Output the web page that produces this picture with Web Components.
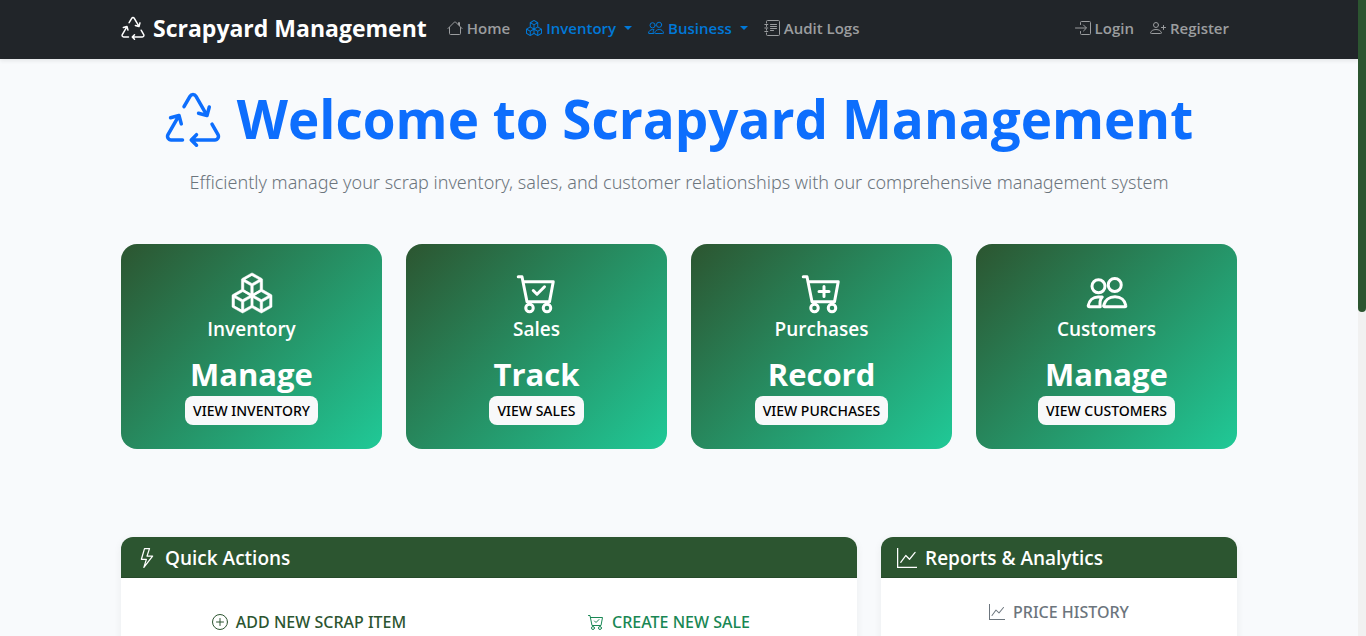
<!DOCTYPE html>
<html lang="en">
<head>
<meta charset="utf-8">
<title>Scrapyard Management</title>
<style>
  html, body { margin: 0; height: 100%; }
  body { font-family: "Open Sans", "Noto Sans", sans-serif; font-size: 16px; line-height: 24px; color: #212529; background: #f8fafc; }
</style>
</head>
<body>
<scrap-app></scrap-app>
<script>
const define = (name, html) => {
  const template = document.createElement('template');
  template.innerHTML = html;
  customElements.define(name, class extends HTMLElement {
    static observedAttributes = ['icon'];
    constructor() {
      super();
      this.attachShadow({ mode: 'open' }).append(template.content.cloneNode(true));
    }
    attributeChangedCallback(attribute, before, value) {
      this.shadowRoot.querySelector('scrap-icon').setAttribute('name', value);
    }
  });
};

const outline = d => `<path class="outline" d="${d}"/>`;
const solid = d => `<path class="solid" d="${d}"/>`;
const cart = outline('M.5 1.5H2l.4 2L4 11.5h9l1.5-8H2.4M6.5 14a1.5 1.5 0 1 1-3 0 1.5 1.5 0 0 1 3 0M13.5 14a1.5 1.5 0 1 1-3 0 1.5 1.5 0 0 1 3 0');
const icons = {
  recycle: solid('M9.302 1.256a1.5 1.5 0 0 0-2.604 0l-1.704 2.98a.5.5 0 0 0 .869.497l1.703-2.981a.5.5 0 0 1 .868 0l2.54 4.444-1.256-.337a.5.5 0 1 0-.26.966l2.415.647a.5.5 0 0 0 .613-.353l.647-2.415a.5.5 0 1 0-.966-.259l-.333 1.242zM2.973 7.773l-1.255.337a.5.5 0 1 1-.26-.966l2.416-.647a.5.5 0 0 1 .612.353l.647 2.415a.5.5 0 0 1-.966.259l-.333-1.242-2.545 4.454a.5.5 0 0 0 .434.748H5a.5.5 0 0 1 0 1H1.723A1.5 1.5 0 0 1 .421 12.24zm10.89 1.463a.5.5 0 1 0-.868.496l1.716 3.004a.5.5 0 0 1-.434.748h-5.57l.647-.646a.5.5 0 1 0-.708-.707l-1.5 1.5a.5.5 0 0 0 0 .707l1.5 1.5a.5.5 0 1 0 .708-.707l-.647-.647h5.57a1.5 1.5 0 0 0 1.302-2.244z'),
  house: outline('M1 8.5 7.65 1.85a.5.5 0 0 1 .7 0L15 8.5M2.5 7.5v6a1 1 0 0 0 1 1h9a1 1 0 0 0 1-1v-6M11.5 4.5v-2h1v3.2'),
  boxes: solid('M7.752.066a.5.5 0 0 1 .496 0l3.75 2.143a.5.5 0 0 1 .252.434v3.995l3.498 2A.5.5 0 0 1 16 9.07v4.286a.5.5 0 0 1-.252.434l-3.75 2.143a.5.5 0 0 1-.496 0l-3.502-2-3.502 2.001a.5.5 0 0 1-.496 0l-3.75-2.143A.5.5 0 0 1 0 13.357V9.071a.5.5 0 0 1 .252-.434L3.75 6.638V2.643a.5.5 0 0 1 .252-.434zM4.25 7.504 1.508 9.071l2.742 1.567 2.742-1.567zM7.5 9.933l-2.75 1.571v3.134l2.75-1.571zm1 3.134 2.75 1.571v-3.134L8.5 9.933zm.508-3.996 2.742 1.567 2.742-1.567-2.742-1.567zm2.242-2.433V3.504L8.5 5.076V8.21zM7.5 8.21V5.076L4.75 3.504v3.134zM5.258 2.643 8 4.21l2.742-1.567L8 1.076zM15 9.933l-2.75 1.571v3.134L15 13.067zM3.75 14.638v-3.134L1 9.933v3.134z'),
  people: outline('M7.2 5.3a2.6 2.6 0 1 1-5.2 0 2.6 2.6 0 0 1 5.2 0M13.7 4.8a2.6 2.6 0 1 1-5.2 0 2.6 2.6 0 0 1 5.2 0M7 13.5c-.4 0-.4-.3-.3-.6.5-1.9 2.1-3.4 4.5-3.4s3.9 1.5 4.3 3.4c.1.4 0 .6-.4.6zM5.3 13.5H.9c-.3 0-.4-.2-.4-.5.4-2 1.9-3.4 3.9-3.4h1.7c-.9.9-1 2.6-.8 3.9'),
  journal: outline('M2.5 3V1.5a1 1 0 0 1 1-1h11a1 1 0 0 1 1 1v13a1 1 0 0 1-1 1h-11a1 1 0 0 1-1-1V13M2.5 5.3v1.2M2.5 9v1.2M.8 4.5h3M.8 8h3M.8 11.5h3M6.5 4.5h6M6.5 6.5h6M6.5 8.5h6M6.5 10.5h3'),
  login: outline('M5.5 4.5v-2a1 1 0 0 1 1-1h8a1 1 0 0 1 1 1v11a1 1 0 0 1-1 1h-8a1 1 0 0 1-1-1v-2M.5 8h10.5M8.5 5l3 3-3 3'),
  register: outline('M8.5 5a2.5 2.5 0 1 1-5 0 2.5 2.5 0 0 1 5 0M1.2 13.5c-.5 0-.7-.2-.7-.6.5-2 2.5-3.4 5.5-3.4s5 1.4 5.5 3.4c0 .4-.2.6-.7.6zM13.5 5.5v4M11.5 7.5h4'),
  cartcheck: cart + outline('M6.5 7 8 8.5l3-3'),
  cartplus: cart + outline('M8.8 5.4v4M6.8 7.4h4'),
  bolt: solid('M5.52.359A.5.5 0 0 1 6 0h4a.5.5 0 0 1 .474.658L8.694 6H12.5a.5.5 0 0 1 .395.807l-7 9a.5.5 0 0 1-.873-.454L6.823 9.5H3.5a.5.5 0 0 1-.48-.641zM6.374 1 4.168 8.5H7.5a.5.5 0 0 1 .478.647L6.78 13.04 11.478 7H8a.5.5 0 0 1-.474-.658L9.306 1z'),
  graph: solid('M0 0h1v15h15v1H0zm14.817 3.113a.5.5 0 0 1 .07.704l-4.5 5.5a.5.5 0 0 1-.74.037L7.06 6.767l-3.656 5.027a.5.5 0 0 1-.808-.588l4-5.5a.5.5 0 0 1 .758-.06l2.609 2.61 4.15-5.073a.5.5 0 0 1 .704-.07'),
  plus: outline('M15.5 8a7.5 7.5 0 1 1-15 0 7.5 7.5 0 0 1 15 0M8 4.5v7M4.5 8h7')
};

customElements.define('scrap-icon', class extends HTMLElement {
  static observedAttributes = ['name'];
  constructor() {
    super();
    this.attachShadow({ mode: 'open' }).innerHTML = `
      <style>
        :host { display: block; flex: none; width: var(--icon-size, 16px); height: var(--icon-size, 16px); }
        svg { display: block; width: 100%; height: 100%; overflow: visible; }
        path { stroke: currentColor; stroke-linecap: round; stroke-linejoin: round; }
        .outline { fill: none; stroke-width: calc(1 + var(--icon-bold, 0)); }
        .solid { fill: currentColor; fill-rule: evenodd; stroke-width: var(--icon-bold, 0); }
      </style>
      <svg viewBox="0 0 16 16" aria-hidden="true"></svg>`;
  }
  attributeChangedCallback(attribute, before, value) {
    this.shadowRoot.querySelector('svg').innerHTML = icons[value] || '';
  }
});

define('nav-link', `
  <style>
    :host { display: block; }
    a { display: flex; align-items: center; gap: 4px; padding: 8px; font-size: 15px; font-weight: 600; line-height: 24px; color: #9b9d9f; text-decoration: none; white-space: nowrap; }
    :host([menu]) a { color: #0078d7; }
    i { display: none; margin-left: 4px; border: 4px solid transparent; border-top-color: currentColor; border-bottom: 0; }
    :host([menu]) i { display: block; }
  </style>
  <a href="#"><scrap-icon></scrap-icon><slot></slot><i></i></a>`);

define('nav-bar', `
  <style>
    :host { display: block; background: #212529; box-shadow: 0 2px 4px rgba(0,0,0,.08); position: relative; }
    nav { display: flex; align-items: center; box-sizing: border-box; max-width: 1140px; margin: 0 auto; padding: 8px 12px 11px; }
    .brand { display: flex; align-items: center; gap: 8px; margin-right: 12px; font-size: 23px; line-height: 40px; font-weight: 700; color: #fff; text-decoration: none; white-space: nowrap; --icon-size: 24px; }
    .end { display: flex; margin-left: auto; }
  </style>
  <nav>
    <a class="brand" href="#"><scrap-icon name="recycle"></scrap-icon>Scrapyard Management</a>
    <nav-link icon="house">Home</nav-link>
    <nav-link icon="boxes" menu>Inventory</nav-link>
    <nav-link icon="people" menu>Business</nav-link>
    <nav-link icon="journal">Audit Logs</nav-link>
    <div class="end">
      <nav-link icon="login">Login</nav-link>
      <nav-link icon="register">Register</nav-link>
    </div>
  </nav>`);

define('page-hero', `
  <style>
    :host { display: block; text-align: center; }
    h1 { display: flex; justify-content: center; align-items: center; gap: 16px; margin: 0 0 14px; font-size: 53px; line-height: 68px; font-weight: 700; color: #0d6efd; --icon-size: 56px; }
    p { margin: 0; font-family: "Noto Sans", sans-serif; font-size: 18px; line-height: 30px; font-weight: 300; color: #6c757d; }
  </style>
  <h1><scrap-icon name="recycle"></scrap-icon><slot name="title"></slot></h1>
  <p><slot></slot></p>`);

define('stat-card', `
  <style>
    :host { display: flex; flex-direction: column; align-items: center; padding: 29px 16px 24px; border-radius: 16px; color: #fff; background: linear-gradient(135deg, #2c5530, #20c997); --icon-size: 40px; --icon-bold: .2; }
    h2 { margin: 4px 0 14px; font-size: 19px; line-height: 24px; font-weight: 600; }
    strong { font-size: 31px; line-height: 38px; font-weight: 700; }
    button { margin: 3px 0 0; padding: 4px 8px; border: 0; border-radius: 8px; background: #f8f9fa; color: #000; font: 500 14px/21px "Noto Sans", sans-serif; text-transform: uppercase; white-space: nowrap; }
  </style>
  <scrap-icon></scrap-icon>
  <h2><slot></slot></h2>
  <strong><slot name="verb"></slot></strong>
  <button type="button"><slot name="action"></slot></button>`);

define('action-button', `
  <style>
    :host { display: block; }
    button { display: flex; width: 100%; justify-content: center; align-items: center; gap: 8px; padding: var(--pad, 6px) 12px; border: 0; background: none; color: inherit; font: 500 16px/24px "Noto Sans", sans-serif; text-transform: uppercase; white-space: nowrap; }
  </style>
  <button type="button"><scrap-icon></scrap-icon><slot></slot></button>`);

define('panel-card', `
  <style>
    :host { display: block; border-radius: 12px; background: #fff; box-shadow: 0 2px 8px rgba(0,0,0,.06); }
    h2 { display: flex; align-items: center; gap: 8px; margin: 0; padding: 9px 16px 7px; border-bottom: 1px solid #264a2a; border-radius: 12px 12px 0 0; background: #2c5530; color: #fff; font-size: 19px; line-height: 24px; font-weight: 600; --icon-size: 20px; }
    div { display: grid; grid-template-columns: repeat(var(--columns, 1), 1fr); gap: 16px; padding: 16px; }
  </style>
  <h2><scrap-icon></scrap-icon><slot name="title"></slot></h2>
  <div><slot></slot></div>`);

define('scroll-rail', `
  <style>
    :host { display: block; flex: none; width: 8px; background: #f1f1f1; }
    div { height: 49%; border-radius: 0 0 4px 4px; background: #2c5530; }
  </style>
  <div></div>`);

define('scrap-app', `
  <style>
    :host { display: flex; height: 100vh; }
    .page { flex: 1; min-width: 0; overflow-x: hidden; overflow-y: auto; scrollbar-width: none; }
    main { box-sizing: border-box; max-width: 1140px; margin: 0 auto; padding: 26px 12px 24px; }
    .stats { display: grid; grid-template-columns: repeat(4, 1fr); gap: 24px; margin: 47px 0 88px; }
    .panels { display: grid; grid-template-columns: repeat(12, 1fr); gap: 24px; }
    .wide { grid-column: span 8; --columns: 2; --pad: 16px; }
    .narrow { grid-column: span 4; }
    .add { color: #2c5530; }
    .sale { color: #198754; }
    .price { color: #6c757d; }
  </style>
  <div class="page">
    <nav-bar></nav-bar>
    <main>
      <page-hero><span slot="title">Welcome to Scrapyard Management</span>Efficiently manage your scrap inventory, sales, and customer relationships with our comprehensive management system</page-hero>
      <section class="stats">
        <stat-card icon="boxes">Inventory<span slot="verb">Manage</span><span slot="action">View Inventory</span></stat-card>
        <stat-card icon="cartcheck">Sales<span slot="verb">Track</span><span slot="action">View Sales</span></stat-card>
        <stat-card icon="cartplus">Purchases<span slot="verb">Record</span><span slot="action">View Purchases</span></stat-card>
        <stat-card icon="people">Customers<span slot="verb">Manage</span><span slot="action">View Customers</span></stat-card>
      </section>
      <section class="panels">
        <panel-card class="wide" icon="bolt"><span slot="title">Quick Actions</span>
          <action-button class="add" icon="plus">Add New Scrap Item</action-button>
          <action-button class="sale" icon="cartcheck">Create New Sale</action-button>
        </panel-card>
        <panel-card class="narrow" icon="graph"><span slot="title">Reports &amp; Analytics</span>
          <action-button class="price" icon="graph">Price History</action-button>
        </panel-card>
      </section>
    </main>
  </div>
  <scroll-rail></scroll-rail>`);
</script>
</body>
</html>
